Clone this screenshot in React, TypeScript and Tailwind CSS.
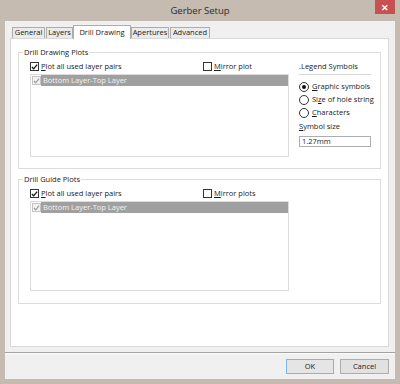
import type { ReactNode } from 'react';

const TABS = [
  { label: 'General', w: 'w-[33px]' },
  { label: 'Layers', w: 'w-[27px] ml-px' },
  { label: 'Drill Drawing', w: 'w-[58px]', active: true },
  { label: 'Apertures', w: 'w-[38px]' },
  { label: 'Advanced', w: 'w-[40px] ml-px' },
];

function Check({ checked, muted }: { checked?: boolean; muted?: boolean }) {
  return (
    <span
      className={`flex h-[9px] w-[9px] shrink-0 items-center justify-center border ${
        muted ? 'border-[#c4c4c4] bg-[#f2f2f2]' : 'border-[#333] bg-white'
      }`}
    >
      {checked && (
        <svg viewBox="0 0 9 9" className="h-[8px] w-[8px]">
          <path
            d="M1.2 4.6 L3.4 6.9 L7.9 1.4"
            fill="none"
            stroke={muted ? '#a0a0a0' : '#111'}
            strokeWidth="1.7"
          />
        </svg>
      )}
    </span>
  );
}

function Radio({ on }: { on?: boolean }) {
  return (
    <span className="flex h-[10px] w-[10px] shrink-0 items-center justify-center rounded-full border border-[#333] bg-white">
      {on && <span className="h-[4px] w-[4px] rounded-full bg-[#111]" />}
    </span>
  );
}

function Key({ children }: { children: ReactNode }) {
  return <span className="underline decoration-[0.5px] underline-offset-[1px]">{children}</span>;
}

function LayerList({ height }: { height: string }) {
  return (
    <div className={`mt-[2px] w-[259px] border border-[#dcdcdc] bg-white ${height}`}>
      <div className="flex h-[11px] items-center">
        <span className="flex w-[9px] justify-center pl-[2px]">
          <Check checked muted />
        </span>
        <span className="ml-[1px] flex h-full flex-1 items-center bg-[#a0a0a0] pl-[2px] text-[#f4f4f4]">
          Bottom Layer-Top Layer
        </span>
      </div>
    </div>
  );
}

function PlotRow({ mirror }: { mirror: string }) {
  return (
    <div className="flex h-[11px] items-center">
      <div className="flex w-[173px] items-center gap-[2px]">
        <Check checked />
        <span>
          <Key>P</Key>lot all used layer pairs
        </span>
      </div>
      <div className="flex items-center gap-[2px]">
        <Check />
        <span>
          <Key>M</Key>
          {mirror}
        </span>
      </div>
    </div>
  );
}

export default function App() {
  return (
    <div className="flex h-[384px] w-[400px] flex-col bg-[#c5bbb1] px-[5px] pb-[5px] font-['Open_Sans',sans-serif] text-[7.5px] leading-none text-[#1a1a1a]">
      <div className="grid h-[21px] grid-cols-[20px_1fr_20px]">
        <div />
        <div className="pt-[6px] text-center text-[9.5px] text-[#2b2b2b]">Gerber Setup</div>
        <div className="flex h-[14px] items-center justify-center bg-[#c75050] text-[9px] font-bold text-white">
          ✕
        </div>
      </div>

      <div className="flex flex-1 flex-col bg-[#f0f0f0]">
        <div className="flex items-end pl-[7px] pt-[4px]">
          {TABS.map((t) => (
            <div
              key={t.label}
              className={`flex items-center justify-center border border-[#acacac] ${t.w} ${
                t.active
                  ? 'relative z-10 -mb-px h-[14px] border-b-0 bg-white'
                  : 'h-[11px] border-b-0 bg-[#ebebeb]'
              }`}
            >
              {t.label}
            </div>
          ))}
        </div>

        <div className="ml-[5px] mr-[6px] h-[309px] border border-[#d9d9d9] bg-white">
          <div className="ml-[7px] mt-[13px] h-[117px] w-[363px] border border-[#dcdcdc]">
            <div className="-mt-[6px] ml-[4px] w-fit bg-white px-[1px] leading-[10px]">Drill Drawing Plots</div>
            <div className="mt-[4px] flex pl-[11px]">
              <div>
                <PlotRow mirror="irror plot" />
                <LayerList height="h-[83px]" />
              </div>
              <div className="ml-[10px] w-[72px] whitespace-nowrap">
                <div className="flex h-[11px] items-center">.Legend Symbols</div>
                <div className="mt-[2px] h-px bg-[#d5d5d5]" />
                <div className="mt-[5px] flex h-[13px] items-center gap-[3px]">
                  <Radio on />
                  <span>
                    <Key>G</Key>raphic symbols
                  </span>
                </div>
                <div className="flex h-[13px] items-center gap-[3px]">
                  <Radio />
                  <span>
                    Si<Key>z</Key>e of hole string
                  </span>
                </div>
                <div className="flex h-[13px] items-center gap-[3px]">
                  <Radio />
                  <span>
                    <Key>C</Key>haracters
                  </span>
                </div>
                <div className="mt-[2px] flex h-[11px] items-center">
                  <span>
                    <Key>S</Key>ymbol size
                  </span>
                </div>
                <div className="mt-[4px] flex h-[11px] items-center border border-[#abadb3] bg-white pl-[2px]">
                  1.27mm
                </div>
              </div>
            </div>
          </div>

          <div className="ml-[7px] mt-[10px] h-[125px] w-[363px] border border-[#dcdcdc]">
            <div className="-mt-[6px] ml-[4px] w-fit bg-white px-[1px] leading-[10px]">Drill Guide Plots</div>
            <div className="mt-[4px] pl-[11px]">
              <PlotRow mirror="irror plots" />
              <LayerList height="h-[90px]" />
            </div>
          </div>
        </div>

        <div className="mt-[5px] h-px bg-[#a3a3a3]" />
        <div className="h-px bg-[#fbfbfb]" />
        <div className="flex justify-end gap-[6px] pr-[6px] pt-[5px]">
          <button className="flex h-[15px] w-[48px] items-center justify-center border border-[#7eb4ea] bg-[#e5e5e5]">
            OK
          </button>
          <button className="flex h-[15px] w-[49px] items-center justify-center border border-[#acacac] bg-[#e1e1e1]">
            Cancel
          </button>
        </div>
      </div>
    </div>
  );
}
